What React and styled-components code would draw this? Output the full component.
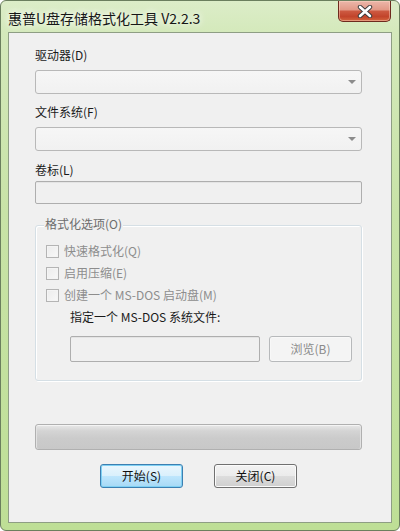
import React from 'react';
import styled, { createGlobalStyle } from 'styled-components';

const Global = createGlobalStyle`
  html, body { margin: 0; padding: 0; background: #ffffff; }
  body { font-family: "Noto Sans CJK SC", "Noto Sans", sans-serif; }
  * { box-sizing: border-box; }
`;

const FONT = `"Noto Sans CJK SC", "Noto Sans", sans-serif`;

const Window = styled.div`
  width: 400px;
  height: 531px;
  display: flex;
  flex-direction: column;
  border: 1px solid #6b7f5e;
  border-radius: 6px;
  overflow: hidden;
  background: linear-gradient(180deg, #dcedc8 0%, #d4e9bb 6%, #c8e3a7 40%, #bedf96 100%);
`;

const TitleBar = styled.div`
  height: 31px;
  display: flex;
  align-items: flex-start;
  padding-left: 7px;
`;

const Title = styled.div`
  align-self: center;
  margin-top: 2px;
  font-family: ${FONT};
  font-size: 14px;
  line-height: 18px;
  color: #161616;
  white-space: nowrap;
  text-shadow: 0 0 6px rgba(255, 255, 255, 0.95), 0 0 10px rgba(255, 255, 255, 0.8);
`;

const CloseBtn = styled.div`
  margin-left: auto;
  margin-right: 8px;
  width: 53px;
  height: 21px;
  display: flex;
  align-items: center;
  justify-content: center;
  border: 1px solid #6e2a1e;
  border-top: none;
  border-radius: 0 0 5px 5px;
  background: linear-gradient(180deg, #ecb7aa 0%, #e29886 45%, #cd5a42 50%, #c2442b 78%, #d4653f 100%);
  box-shadow: inset 0 0 0 1px rgba(255, 220, 200, 0.45);
`;

const Client = styled.div`
  flex: 1;
  margin: 0 7px 7px 7px;
  border: 1px solid #8e9e84;
  background: #f0f0f0;
  padding: 14px 29px 0 26px;
  display: flex;
  flex-direction: column;
`;

const Label = styled.div`
  margin-top: ${(p) => p.$gap || 0}px;
  font-family: ${FONT};
  font-size: 12px;
  line-height: 16px;
  height: 16px;
  color: ${(p) => (p.$disabled ? '#8a8a8a' : '#1a1a1a')};
  margin-left: ${(p) => p.$indent || 0}px;
  white-space: nowrap;
`;

const Combo = styled.div`
  margin-top: ${(p) => p.$gap || 0}px;
  height: 24px;
  border: 1px solid #b8b8b8;
  border-radius: 3px;
  background: linear-gradient(180deg, #f6f6f6 0%, #f1f1f1 100%);
  display: flex;
  align-items: center;
  justify-content: flex-end;
  padding-right: 5px;
`;

const Arrow = styled.div`
  width: 0;
  height: 0;
  border-left: 4px solid transparent;
  border-right: 4px solid transparent;
  border-top: 4px solid #8c8c8c;
`;

const TextBox = styled.div`
  margin-top: ${(p) => p.$gap || 0}px;
  height: ${(p) => p.$h || 23}px;
  width: ${(p) => (p.$w ? `${p.$w}px` : 'auto')};
  border: 1px solid #aeaeae;
  border-radius: 2px;
  background: #f0f0f0;
  box-shadow: inset 0 1px 0 #e4e4e4;
`;

const Group = styled.div`
  position: relative;
  margin-top: 21px;
  height: 156px;
  border: 1px solid #d5dfe5;
  border-radius: 3px;
  box-shadow: inset 1px 1px 0 #ffffff, 1px 1px 0 #ffffff;
  padding: 14px 0 0 10px;
  display: flex;
  flex-direction: column;
`;

const GroupTitle = styled.div`
  position: absolute;
  top: -10px;
  left: 8px;
  padding: 0 1px;
  background: #f0f0f0;
  font-family: ${FONT};
  font-size: 12px;
  line-height: 16px;
  color: #6d6d6d;
`;

const CheckRow = styled.div`
  height: 22px;
  display: flex;
  align-items: center;
  gap: 5px;
`;

const CheckBox = styled.div`
  width: 13px;
  height: 13px;
  border: 1px solid #b4b4b4;
  background: linear-gradient(135deg, #ececec 0%, #f8f8f8 100%);
  box-shadow: inset 0 0 0 1px #f4f4f4;
`;

const CheckText = styled.span`
  font-family: ${FONT};
  font-size: 12px;
  line-height: 16px;
  color: #8d8d8d;
  white-space: nowrap;
`;

const FileRow = styled.div`
  margin-top: 11px;
  margin-left: 24px;
  display: flex;
  gap: 9px;
`;

const Button = styled.div`
  width: ${(p) => p.$w || 83}px;
  height: ${(p) => p.$h || 24}px;
  display: flex;
  align-items: center;
  justify-content: center;
  border-radius: 3px;
  font-family: ${FONT};
  font-size: 12px;
  line-height: 16px;
  white-space: nowrap;
  color: ${(p) => (p.$variant === 'disabled' ? '#8a8a8a' : '#111111')};
  border: 1px solid
    ${(p) => (p.$variant === 'default' ? '#3c7fb1' : p.$variant === 'disabled' ? '#b7b9bb' : '#707070')};
  background: ${(p) =>
    p.$variant === 'default'
      ? 'linear-gradient(180deg, #eaf6fd 0%, #d9f0fc 50%, #bee6fd 51%, #a7d9f5 100%)'
      : p.$variant === 'disabled'
      ? '#f4f4f4'
      : 'linear-gradient(180deg, #f2f2f2 0%, #ebebeb 50%, #dddddd 51%, #cfcfcf 100%)'};
  box-shadow: ${(p) =>
    p.$variant === 'default'
      ? 'inset 0 0 0 1px #7fd0f3'
      : p.$variant === 'disabled'
      ? 'inset 0 0 0 1px #f8f8f8'
      : 'inset 0 0 0 1px #fbfbfb'};
`;

const Progress = styled.div`
  margin-top: 43px;
  height: 26px;
  border: 1px solid #b0b0b0;
  border-radius: 3px;
  background: linear-gradient(180deg, #e8e8e8 0%, #d4d4d4 25%, #cbcbcb 55%, #c8c8c8 100%);
  box-shadow: inset 0 1px 0 #f4f4f4, inset 1px 0 0 #e2e2e2, inset -1px 0 0 #e2e2e2;
`;

const ButtonRow = styled.div`
  margin-top: 14px;
  display: flex;
  justify-content: center;
  gap: 31px;
`;

const CloseIcon = () => (
  <svg width="16" height="13" viewBox="0 0 16 13">
    <path d="M3 2 L13 11 M13 2 L3 11" stroke="#3a3a3a" strokeWidth="4.4" strokeLinecap="round" />
    <path d="M3 2 L13 11 M13 2 L3 11" stroke="#ffffff" strokeWidth="2.6" strokeLinecap="round" />
  </svg>
);

export default function App() {
  return (
    <>
      <Global />
      <Window>
        <TitleBar>
          <Title>惠普U盘存储格式化工具 V2.2.3</Title>
          <CloseBtn>
            <CloseIcon />
          </CloseBtn>
        </TitleBar>
        <Client>
          <Label>驱动器(D)</Label>
          <Combo $gap={7}>
            <Arrow />
          </Combo>
          <Label $gap={10}>文件系统(F)</Label>
          <Combo $gap={7}>
            <Arrow />
          </Combo>
          <Label $gap={11}>卷标(L)</Label>
          <TextBox $gap={3} />
          <Group>
            <GroupTitle>格式化选项(O)</GroupTitle>
            <CheckRow>
              <CheckBox />
              <CheckText>快速格式化(Q)</CheckText>
            </CheckRow>
            <CheckRow>
              <CheckBox />
              <CheckText>启用压缩(E)</CheckText>
            </CheckRow>
            <CheckRow>
              <CheckBox />
              <CheckText>创建一个 MS-DOS 启动盘(M)</CheckText>
            </CheckRow>
            <Label $gap={3} $indent={24}>指定一个 MS-DOS 系统文件:</Label>
            <FileRow>
              <TextBox $w={190} $h={26} />
              <Button $variant="disabled" $w={83} $h={26}>浏览(B)</Button>
            </FileRow>
          </Group>
          <Progress />
          <ButtonRow>
            <Button $variant="default">开始(S)</Button>
            <Button>关闭(C)</Button>
          </ButtonRow>
        </Client>
      </Window>
    </>
  );
}
